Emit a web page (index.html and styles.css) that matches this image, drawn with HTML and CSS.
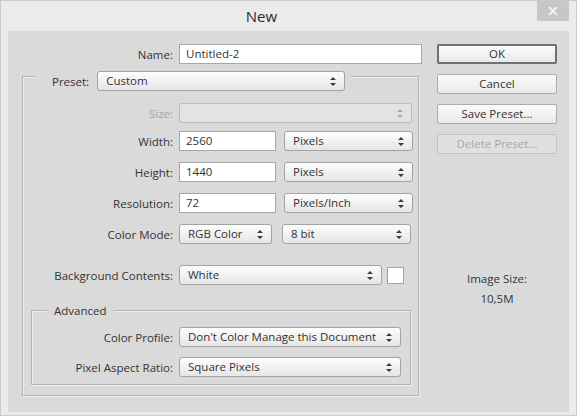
FILE: index.html
```html
<!DOCTYPE html>
<html lang="en">
<head>
    <meta charset="UTF-8">
    <title>New</title>
    <link rel="stylesheet" href="styles.css">
</head>
<body>
    <div class="window">
        <div class="titlebar">
            <div class="title">New</div>
            <div class="close">
                <svg width="10" height="10" viewBox="0 0 10 10"><path d="M1 1 L9 9 M9 1 L1 9" stroke="#fff" stroke-width="1.6"/></svg>
            </div>
        </div>

        <div class="client">
            <div class="form">
                <div class="row row-name">
                    <span class="lbl lbl-top">Name:</span>
                    <div class="field w-name">Untitled-2</div>
                </div>

                <div class="group">
                    <div class="group-head">
                        <span class="head-lbl">Preset:</span>
                        <div class="select w-preset">Custom<svg class="arrow" width="6" height="9" viewBox="0 0 6 9"><path d="M3 0 L6 3 L0 3 Z M0 6 L6 6 L3 9 Z"/></svg></div>
                    </div>

                    <div class="row row-size disabled">
                        <span class="lbl">Size:</span>
                        <div class="select w-full"><svg class="arrow" width="6" height="9" viewBox="0 0 6 9"><path d="M3 0 L6 3 L0 3 Z M0 6 L6 6 L3 9 Z"/></svg></div>
                    </div>
                    <div class="row row-gap9">
                        <span class="lbl">Width:</span>
                        <div class="field w-num">2560</div>
                        <div class="select w-unit">Pixels<svg class="arrow" width="6" height="9" viewBox="0 0 6 9"><path d="M3 0 L6 3 L0 3 Z M0 6 L6 6 L3 9 Z"/></svg></div>
                    </div>
                    <div class="row">
                        <span class="lbl">Height:</span>
                        <div class="field w-num">1440</div>
                        <div class="select w-unit">Pixels<svg class="arrow" width="6" height="9" viewBox="0 0 6 9"><path d="M3 0 L6 3 L0 3 Z M0 6 L6 6 L3 9 Z"/></svg></div>
                    </div>
                    <div class="row">
                        <span class="lbl">Resolution:</span>
                        <div class="field w-num">72</div>
                        <div class="select w-unit">Pixels/Inch<svg class="arrow" width="6" height="9" viewBox="0 0 6 9"><path d="M3 0 L6 3 L0 3 Z M0 6 L6 6 L3 9 Z"/></svg></div>
                    </div>
                    <div class="row">
                        <span class="lbl">Color Mode:</span>
                        <div class="select w-mode">RGB Color<svg class="arrow" width="6" height="9" viewBox="0 0 6 9"><path d="M3 0 L6 3 L0 3 Z M0 6 L6 6 L3 9 Z"/></svg></div>
                        <div class="select w-unit w-bits">8 bit<svg class="arrow" width="6" height="9" viewBox="0 0 6 9"><path d="M3 0 L6 3 L0 3 Z M0 6 L6 6 L3 9 Z"/></svg></div>
                    </div>
                    <div class="row row-bg">
                        <span class="lbl">Background Contents:</span>
                        <div class="select w-bg">White<svg class="arrow" width="6" height="9" viewBox="0 0 6 9"><path d="M3 0 L6 3 L0 3 Z M0 6 L6 6 L3 9 Z"/></svg></div>
                        <div class="swatch"></div>
                    </div>

                    <div class="group group-adv">
                        <div class="adv-head">Advanced</div>
                        <div class="row row-first">
                            <span class="lbl">Color Profile:</span>
                            <div class="select w-profile">Don't Color Manage this Document<svg class="arrow" width="6" height="9" viewBox="0 0 6 9"><path d="M3 0 L6 3 L0 3 Z M0 6 L6 6 L3 9 Z"/></svg></div>
                        </div>
                        <div class="row row-gap10">
                            <span class="lbl">Pixel Aspect Ratio:</span>
                            <div class="select w-profile">Square Pixels<svg class="arrow" width="6" height="9" viewBox="0 0 6 9"><path d="M3 0 L6 3 L0 3 Z M0 6 L6 6 L3 9 Z"/></svg></div>
                        </div>
                    </div>
                </div>
            </div>

            <div class="side">
                <div class="btn btn-default">OK</div>
                <div class="btn">Cancel</div>
                <div class="btn">Save Preset...</div>
                <div class="btn btn-disabled">Delete Preset...</div>
                <div class="size-info">
                    <p>Image Size:</p>
                    <p>10,5M</p>
                </div>
            </div>
        </div>
    </div>
</body>
</html>
```

FILE: styles.css
```css
body {
    margin: 0;
    background: #fff;
    font-family: "Open Sans", "Noto Sans", Arial, sans-serif;
    font-size: 11.5px;
    color: #333;
}

.window {
    width: 575px;
    height: 414px;
    background: #ebebeb;
    border: 1px solid #c9c9c9;
    display: flex;
    flex-direction: column;
}

.titlebar {
    height: 30px;
    display: flex;
    position: relative;
}
.title {
    flex: 1;
    text-align: center;
    padding-right: 54px;
    font-size: 15px;
    line-height: 31px;
    color: #2b2b2b;
}
.close {
    position: absolute;
    top: 0;
    right: 7px;
    width: 32px;
    height: 20px;
    background: #c7c7c7;
    display: flex;
    align-items: center;
    justify-content: center;
}

.client {
    flex: 1;
    margin: 0 7px 3px 7px;
    background: #dadada;
    display: flex;
    padding-top: 13px;
}

/* left side with all the fields */
.form {
    padding-left: 14px;
    width: 397px;
    flex-shrink: 0;
}
.row {
    display: flex;
    align-items: center;
    height: 20px;
    margin-top: 11px;
}
.row-name {
    margin-top: 0;
}
.lbl {
    width: 150px;
    padding-right: 6px;
    text-align: right;
    flex-shrink: 0;
}
.lbl-top {
    width: 151px;
}
.row-size { margin-top: 12px; }
.row-gap9 { margin-top: 8px; }
.row-bg { margin-top: 21px; }

.field {
    height: 18px;
    line-height: 18px;
    background: #fff;
    border: 1px solid #a6a6a6;
    padding-left: 6px;
    box-sizing: content-box;
    flex-shrink: 0;
}
.select {
    position: relative;
    height: 18px;
    line-height: 18px;
    padding-left: 8px;
    border: 1px solid #a3a3a3;
    border-radius: 3px;
    background: linear-gradient(#fdfdfd, #e6e6e6);
    box-sizing: content-box;
    flex-shrink: 0;
}
.arrow {
    position: absolute;
    right: 8px;
    top: 5px;
    fill: #3c3c3c;
}

.w-name { width: 235px; }
.w-num { width: 89px; }
.w-unit { width: 119px; margin-left: 8px; }
.w-bits { margin-left: 10px; }
.w-mode { width: 83px; }
.w-full { width: 223px; }
.w-bg { width: 193px; }
.w-profile { width: 213px; }
.w-preset { width: 238px; }

.disabled .lbl { color: #a3a3a3; }
.disabled .select {
    background: #e3e3e3;
    border-color: #bcbcbc;
}
.disabled .arrow { fill: #a8a8a8; }

.swatch {
    width: 15px;
    height: 15px;
    margin-left: 5px;
    background: #fff;
    border: 1px solid #a3a3a3;
}

/* etched group boxes */
.group {
    margin-top: 12px;
    width: 395px;
    height: 318px;
    border: 1px solid #b4b4b4;
    box-shadow: inset 1px 1px 0 #eeeeee, 1px 1px 0 #eeeeee;
}
.group-head {
    display: flex;
    align-items: center;
    width: fit-content;
    height: 20px;
    margin: -6px 0 0 13px;
    padding: 0 6px 0 16px;
    background: #dadada;
}
.head-lbl {
    margin-right: 8px;
}

.group-adv {
    margin: 25px 0 0 8px;
    width: 378px;
    height: 73px;
}
.adv-head {
    width: fit-content;
    margin: -8px 0 0 15px;
    padding: 0 7px;
    line-height: 16px;
    background: #dadada;
}
.group-adv .row-first { margin-top: 8px; }
.group-adv .row-gap10 { margin-top: 10px; }
.group-adv .lbl { width: 141px; }
.group-adv .w-profile { width: 212px; }

/* right side buttons */
.side {
    margin-left: 18px;
    width: 120px;
}
.btn {
    height: 18px;
    line-height: 18px;
    text-align: center;
    border: 1px solid #acacac;
    border-radius: 2px;
    background: linear-gradient(#fbfbfb, #e9e9e9);
    margin-bottom: 10px;
}
.btn-default {
    border: 2px solid #6f6f6f;
    height: 16px;
    line-height: 16px;
}
.btn-disabled {
    color: #a8a8a8;
    border-color: #c3c3c3;
    background: #e0e0e0;
}
.size-info {
    margin-top: 118px;
    text-align: center;
}
.size-info p {
    margin: 0 0 6px;
    line-height: 14px;
}
```
